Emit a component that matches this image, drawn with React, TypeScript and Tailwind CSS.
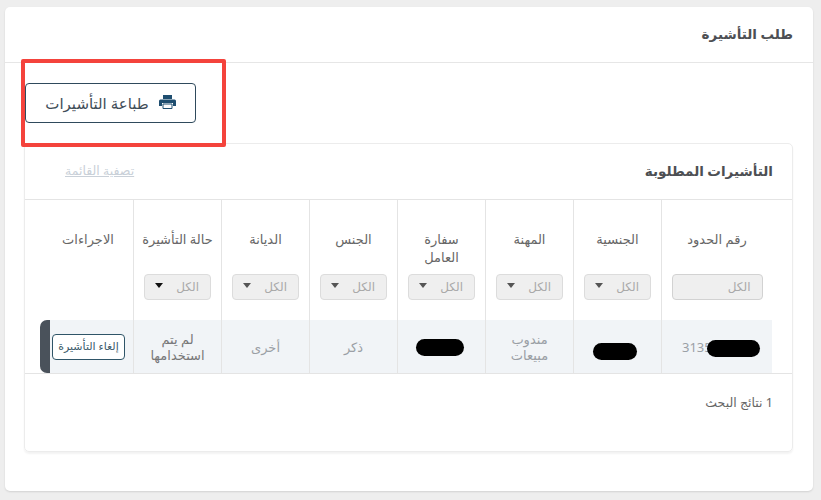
const columns = ["رقم الحدود", "الجنسية", "المهنة", "سفارة العامل", "الجنس", "الديانة", "حالة التأشيرة", "الاجراءات"];

const gridClass = "grid grid-cols-[131px_repeat(6,88px)_1fr]";

function PrintIcon() {
  return (
    <svg width="17" height="14" viewBox="0 0 17 14" className="mb-[3px]">
      <path d="M4 0h9v4H4z" fill="#1f4e70" />
      <path d="M1.5 4.5h14A1.5 1.5 0 0 1 17 6v5h-3V8H3v3H0V6a1.5 1.5 0 0 1 1.5-1.5z" fill="#1f4e70" />
      <path d="M4 9h9v4.5H4z" fill="none" stroke="#1f4e70" />
    </svg>
  );
}

function Redaction({ className }: { className: string }) {
  return <span className={`absolute rounded-full bg-black ${className}`} />;
}

function SelectFilter({ dark }: { dark?: boolean }) {
  return (
    <div className="flex h-[26px] w-[67px] items-center justify-between rounded-[4px] border border-[#dcdcdc] bg-[#efefef] pr-[11px] pl-[10px] text-[12px] text-[#a9a9a9]">
      <span>الكل</span>
      <svg width="8" height="5" viewBox="0 0 8 5" className="mb-1">
        <path d="M0 0h8L4 5z" fill={dark ? "#111111" : "#555555"} />
      </svg>
    </div>
  );
}

function HeaderRow() {
  return (
    <div className={gridClass}>
      {columns.map((label, i) => (
        <div key={label} className={`flex h-[120px] flex-col items-center ${i < 7 ? "border-l border-[#e4e4e4]" : ""}`}>
          <div className={`h-[74px] pt-[30px] text-center text-[13px] leading-[18px] text-[#666666] ${i === 0 ? "mr-5" : ""} ${i === 7 ? "ml-[18px]" : ""} ${i === 3 ? "w-[54px]" : "w-[84px]"}`}>
            {label}
          </div>
          {i === 0 && (
            <div className="mr-5 flex h-[26px] w-[91px] items-center rounded-[4px] border border-[#d2d2d2] bg-[#efefef] pr-[11px] text-[12px] text-[#a9a9a9]">
              الكل
            </div>
          )}
          {i > 0 && i < 7 && <SelectFilter dark={i === 6} />}
        </div>
      ))}
    </div>
  );
}

function DataRow() {
  const cellClass = "relative flex h-[53px] items-center justify-center border-l border-[#e4e4e4] bg-[#f1f4f7] text-center text-[13px] leading-4 text-[#9a9fa5]";

  return (
    <div className={`${gridClass} border-b border-[#e4e4e4]`}>
      <div className="h-[53px] border-l border-[#e4e4e4]">
        <div className={`${cellClass} mr-5 justify-start border-l-0 pr-0`}>
          <span dir="ltr" className="absolute left-5 text-[13px] text-[#9aa0a6]">3135</span>
          <Redaction className="left-[45px] top-5 h-[17px] w-[53px]" />
        </div>
      </div>
      <div className={cellClass}>
        <Redaction className="left-[19px] top-[23px] h-[17px] w-[44px]" />
      </div>
      <div className={cellClass}>
        <span className="w-[50px]">مندوب مبيعات</span>
      </div>
      <div className={cellClass}>
        <Redaction className="left-[18px] top-[19px] h-[17px] w-[48px]" />
      </div>
      <div className={cellClass}>ذكر</div>
      <div className={cellClass}>أخرى</div>
      <div className={`${cellClass} text-[#777777]`}>
        <span className="w-[62px]">لم يتم استخدامها</span>
      </div>
      <div className="h-[53px]">
        <div className="relative ml-[25px] flex h-[53px] items-center justify-end bg-[#f1f4f7] pl-[2px]">
          <span className="absolute -left-[10px] top-0 h-[53px] w-[10px] rounded-l-[7px] bg-[#4a525b]" />
          <button className="h-[26px] w-[73px] whitespace-nowrap rounded-[4px] border border-[#2f5568] bg-white text-[11px] text-[#3c5a6b]">
            إلغاء التأشيرة
          </button>
        </div>
      </div>
    </div>
  );
}

export default function App() {
  return (
    <div dir="rtl" className="h-[500px] w-[821px] overflow-hidden bg-[#eeeeee] pt-[7px] pr-2 pl-[5px] font-['Noto_Sans','DejaVu_Sans',sans-serif]">
      <section className="relative h-[484px] rounded-[5px] bg-white shadow-[0_1px_2px_rgba(0,0,0,0.12)]">
        <header className="flex h-[56px] items-center border-b border-[#e6e6e6] pr-5 pb-[1px] text-[13.5px] font-bold text-[#4d4f53]">
          طلب التأشيرة
        </header>

        <div className="flex h-[80px] items-start justify-end pt-5 pl-5">
          <button className="flex h-10 w-[171px] items-center justify-center gap-[10px] rounded-[4px] border border-[#2f4a5c] text-[15px] text-[#3f4d58]">
            <PrintIcon />
            طباعة التأشيرات
          </button>
        </div>

        <div className="mr-5 ml-[19px] h-[309px] rounded-[5px] border border-[#ececec] shadow-[0_2px_2px_rgba(0,0,0,0.05)]">
          <div className="flex h-[56px] items-center justify-between border-b border-[#e4e4e4] pr-[19px] pl-10">
            <h2 className="text-[13.5px] font-bold text-[#4d4f53]">التأشيرات المطلوبة</h2>
            <a className="text-[12.5px] text-[#c9d0d8] underline">تصفية القائمة</a>
          </div>
          <HeaderRow />
          <DataRow />
          <p className="mt-[20px] pr-[19px] text-[12.5px] text-[#666666]">1 نتائج البحث</p>
        </div>

        <div className="pointer-events-none absolute top-[52px] left-4 h-[88px] w-[205px] rounded-[2px] border-[4px] border-[#f4433c]" />
      </section>
    </div>
  );
}
